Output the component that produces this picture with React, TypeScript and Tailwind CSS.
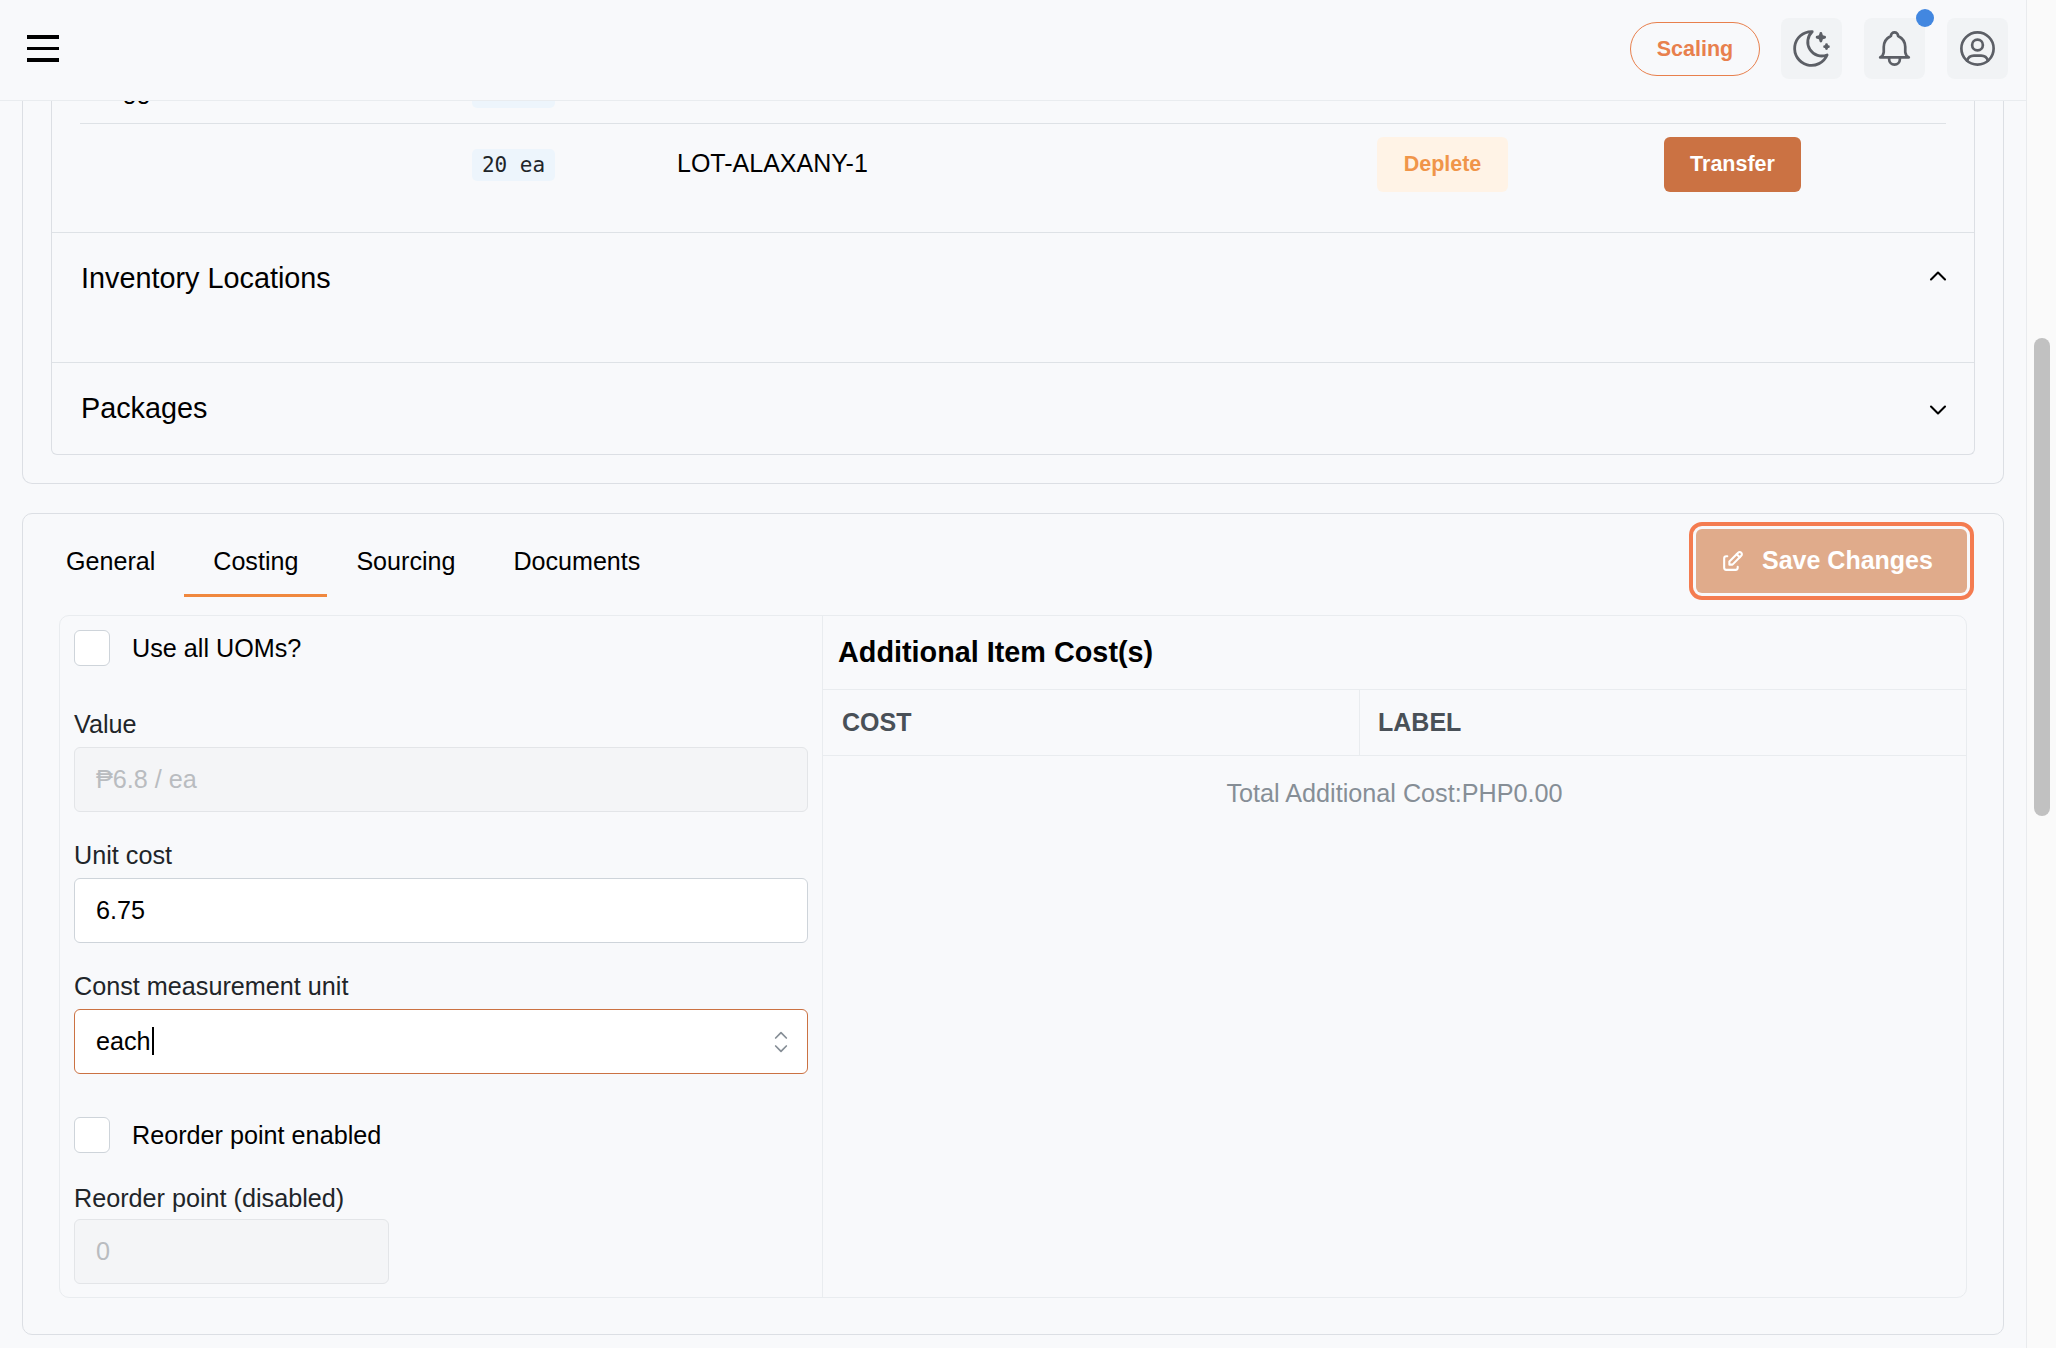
import { TbBell, TbChevronDown, TbChevronUp, TbEdit, TbMoonStars, TbSelector, TbUserCircle } from 'react-icons/tb';

const body = "font-['Liberation_Sans',Arial,sans-serif]";

function IconButton({ children }: { children: React.ReactNode }) {
  return (
    <div className="flex h-[61px] w-[61px] items-center justify-center rounded-[8px] bg-[#f1f3f5] text-[#5c5f66]">
      {children}
    </div>
  );
}

function Header() {
  return (
    <header className="relative z-10 flex h-[101px] flex-none items-center justify-between border-b border-[#e9ecef] bg-[#f8f9fb] pb-[3px] pl-[27px] pr-[18px]">
      <div className="flex w-[32px] flex-col gap-[8px]">
        <span className="h-[3.5px] bg-black" />
        <span className="h-[3.5px] bg-black" />
        <span className="h-[3.5px] bg-black" />
      </div>
      <div className="flex items-center gap-[22px]">
        <div className="mr-[-1px] flex h-[54px] w-[130px] items-center justify-center rounded-full border border-[#e8804d] pt-[2px] text-[21.5px] font-bold text-[#e8804d]">
          Scaling
        </div>
        <IconButton>
          <TbMoonStars size={45} strokeWidth={1.5} />
        </IconButton>
        <div className="relative">
          <IconButton>
            <TbBell size={43} strokeWidth={1.5} />
          </IconButton>
          <span className="absolute right-[-9px] top-[-9px] h-[18px] w-[18px] rounded-full bg-[#4287e0]" />
        </div>
        <IconButton>
          <TbUserCircle size={43} strokeWidth={1.5} />
        </IconButton>
      </div>
    </header>
  );
}

function Chip({ children }: { children: React.ReactNode }) {
  return (
    <span className="flex h-[32px] w-[83px] items-center justify-center rounded-[5px] bg-[#edf5fc] pt-[2px] font-['DejaVu_Sans_Mono',monospace] text-[21px] text-[#212529]">
      {children}
    </span>
  );
}

function LotRows() {
  return (
    <div className="mx-[28px] text-[25px] text-black">
      <div className="grid h-[108px] grid-cols-[392px_1fr] items-end border-b border-[#dee2e6] pb-[15px]">
        <span className="mb-[3px] pl-[8px] leading-[30px]">Flagged</span>
        <Chip>20 ea</Chip>
      </div>
      <div className="grid h-[108px] grid-cols-[392px_205px_700px_287px_1fr] items-start pt-[13px]">
        <span />
        <span className="pt-[12px]">
          <Chip>20 ea</Chip>
        </span>
        <span className="pt-[11px] leading-[30px]">LOT-ALAXANY-1</span>
        <button className="h-[55px] w-[131px] rounded-[6px] bg-[#fff3e6] text-[21.5px] font-bold text-[#f0954a]">
          Deplete
        </button>
        <button className="h-[55px] w-[137px] rounded-[6px] bg-[#cb7243] text-[21.5px] font-bold text-white">
          Transfer
        </button>
      </div>
    </div>
  );
}

function AccordionHead({ label, open }: { label: string; open?: boolean }) {
  return (
    <div className="flex h-[91px] items-center justify-between pl-[29px] pr-[22px] text-[28.8px] text-black">
      <span>{label}</span>
      {open ? (
        <TbChevronUp size={28} strokeWidth={1.8} className="-mt-[5px]" />
      ) : (
        <TbChevronDown size={28} strokeWidth={1.8} className="mt-[2px]" />
      )}
    </div>
  );
}

function StockCard() {
  return (
    <section className="-mt-[85px] rounded-b-[10px] border-x border-b border-[#dcdfe4] px-[28px] pb-[28px]">
      <div className="rounded-b-[6px] border-x border-b border-[#dcdfe4]">
        <LotRows />
        <div className="h-[130px] border-t border-[#dee2e6]">
          <AccordionHead label="Inventory Locations" open />
        </div>
        <div className="border-t border-[#dee2e6]">
          <AccordionHead label="Packages" />
        </div>
      </div>
    </section>
  );
}

function Checkbox({ label }: { label: string }) {
  return (
    <div className="flex items-center gap-[22px]">
      <span className="h-[36px] w-[36px] rounded-[6px] border border-[#ced4da] bg-white" />
      <span className="text-[25.2px] leading-[34px] text-black">{label}</span>
    </div>
  );
}

function FieldLabel({ children }: { children: React.ReactNode }) {
  return <div className="mb-[8px] text-[25.2px] leading-[30px] text-[#212529]">{children}</div>;
}

function CostingForm() {
  const field = 'flex h-[65px] items-center rounded-[6px] border px-[21px] text-[25.2px]';
  return (
    <div className="w-[763px] flex-none border-r border-[#e9ecef] px-[14px] pt-[14px]">
      <Checkbox label="Use all UOMs?" />
      <div className="mt-[43px]">
        <FieldLabel>Value</FieldLabel>
        <div className={`${field} border-[#e3e5e8] bg-[#f4f5f7] text-[#b9bcc0]`}>₱6.8 / ea</div>
      </div>
      <div className="mt-[28px]">
        <FieldLabel>Unit cost</FieldLabel>
        <div className={`${field} border-[#ced4da] bg-white text-black`}>6.75</div>
      </div>
      <div className="mt-[28px]">
        <FieldLabel>Const measurement unit</FieldLabel>
        <div className={`${field} justify-between border-[#cb7243] bg-white pr-[10px] text-black`}>
          <span className="flex items-center">
            each
            <span className="ml-[1px] h-[28px] w-[2px] bg-black" />
          </span>
          <TbSelector size={32} strokeWidth={1.3} className="text-[#868e96]" />
        </div>
      </div>
      <div className="mt-[43px]">
        <Checkbox label="Reorder point enabled" />
      </div>
      <div className="mt-[30px]">
        <div className="mb-[6px] text-[25.2px] leading-[30px] text-[#212529]">Reorder point (disabled)</div>
        <div className={`${field} w-[315px] border-[#e3e5e8] bg-[#f4f5f7] text-[#b9bcc0]`}>0</div>
      </div>
    </div>
  );
}

function AdditionalCosts() {
  return (
    <div className="flex min-w-0 flex-1 flex-col">
      <div className="flex h-[74px] items-center border-b border-[#e9ecef] pl-[15px] text-[28.8px] font-bold text-black">
        Additional Item Cost(s)
      </div>
      <div className="grid h-[66px] grid-cols-[537px_1fr] border-b border-[#e9ecef] text-[25px] font-bold text-[#495057]">
        <div className="flex items-center border-r border-[#e9ecef] pl-[19px]">COST</div>
        <div className="flex items-center pl-[18px]">LABEL</div>
      </div>
      <div className="pt-[21px] text-center text-[25.2px] leading-[32px] text-[#868e96]">Total Additional Cost:PHP0.00</div>
    </div>
  );
}

function CostingCard() {
  const tabs = ['General', 'Costing', 'Sourcing', 'Documents'];
  return (
    <section className="mt-[29px] rounded-[10px] border border-[#dcdfe4] pb-[36px] pt-[15px]">
      <div className="flex h-[68px] items-start justify-between pl-[14px] pr-[36px]">
        <div className="flex h-[68px]">
          {tabs.map((tab) => (
            <div
              key={tab}
              className={`flex h-[68px] items-center border-b-[3px] px-[29px] pt-[1px] text-[25.1px] text-black ${tab === 'Costing' ? 'border-[#f0883e]' : 'border-transparent'}`}
            >
              {tab}
            </div>
          ))}
        </div>
        <button className="flex h-[64px] w-[271px] items-center gap-[17px] rounded-[6px] bg-[#e0ab8b] pl-[24px] text-[25px] font-bold text-white outline-[4px] outline-offset-[3px] outline-[#f47c50]">
          <TbEdit size={25} strokeWidth={2} />
          Save Changes
        </button>
      </div>
      <div className="mx-[36px] mt-[18px] flex h-[683px] rounded-[10px] border border-[#e9ecef]">
        <CostingForm />
        <AdditionalCosts />
      </div>
    </section>
  );
}

export default function App() {
  return (
    <div className={`${body} flex h-[1348px] w-full overflow-hidden bg-[#f8f9fb]`}>
      <main className="flex w-[2027px] flex-none flex-col border-r border-[#e9ebee]">
        <Header />
        <div className="min-h-0 flex-1 overflow-hidden px-[22px]">
          <StockCard />
          <CostingCard />
        </div>
      </main>
      <div className="flex-1 bg-[#fafafa] pl-[7px] pr-[6px] pt-[338px]">
        <div className="h-[478px] rounded-full bg-[#c1c1c1]" />
      </div>
    </div>
  );
}
